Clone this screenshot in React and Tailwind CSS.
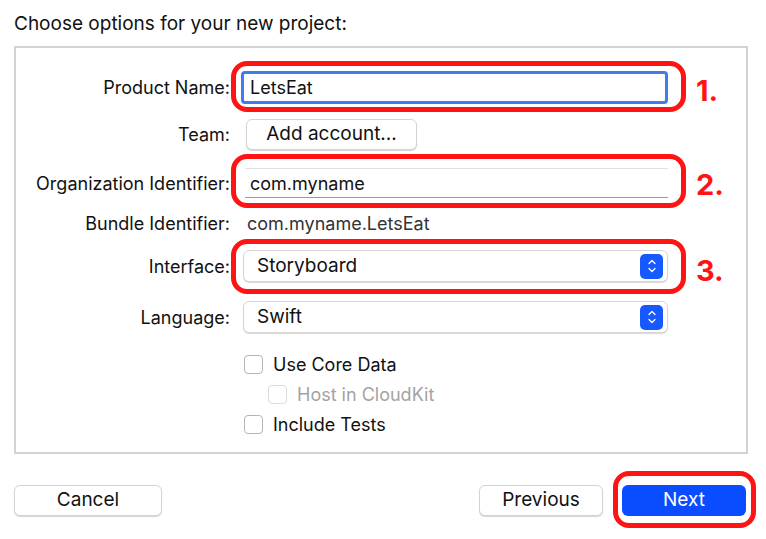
import { ChevronUp, ChevronDown } from 'lucide-react';

function Stepper() {
  return (
    <div className="w-[23px] h-[25px] rounded-[5px] bg-[#1559ff] flex flex-col items-center justify-center text-white">
      <ChevronUp size={12} strokeWidth={2.5} className="-mb-[2px]" />
      <ChevronDown size={12} strokeWidth={2.5} className="-mt-[2px]" />
    </div>
  );
}

function Label({ children }) {
  return <div className="w-[215px] shrink-0 text-right pr-[1px] text-[18px] text-[#111]">{children}</div>;
}

function Callout({ top, height, num }) {
  return (
    <>
      <div
        className="absolute left-[215px] w-[455px] rounded-[16px] border-[5px] border-[#ff1414] pointer-events-none"
        style={{ top, height }}
      />
      <div className="absolute left-[680px] text-[29px] font-bold text-[#ff1414] leading-none" style={{ top: top + height / 2 - 11 }}>
        {num}
      </div>
    </>
  );
}

function Popup({ value }) {
  return (
    <div className="ml-[12px] w-[425px] h-[32px] bg-white rounded-[6px] border border-[#d6d6d6] shadow-[0_1px_1px_rgba(0,0,0,0.15)] flex items-center justify-between pl-[13px] pr-[4px] text-[19px] text-[#111]">
      <span>{value}</span>
      <Stepper />
    </div>
  );
}

function Check({ label, disabled }) {
  return (
    <div className={`flex items-center gap-[10px] ${disabled ? 'ml-[24px]' : ''}`}>
      <div className={`w-[19px] h-[19px] rounded-[4px] border bg-white ${disabled ? 'border-[#dcdcdc]' : 'border-[#b5b5b5]'}`} />
      <span className={`text-[18px] ${disabled ? 'text-[#a3a3a3]' : 'text-[#111]'}`}>{label}</span>
    </div>
  );
}

function Button({ children, className }) {
  return (
    <button className={`h-[31px] rounded-[6px] border border-[#d4d4d4] bg-white shadow-[0_1px_1px_rgba(0,0,0,0.18)] text-[19px] text-[#111] ${className}`}>
      {children}
    </button>
  );
}

export default function App() {
  return (
    <div className="w-[766px] h-[539px] bg-white font-['Inter',sans-serif] relative">
      <div className="pl-[14px] pt-[10px] h-[46px] text-[19px] text-[#111]">Choose options for your new project:</div>

      <div className="mx-[14px] w-[734px] h-[408px] border-2 border-[#d3d3d3] pt-[15px]">
        {/* product name */}
        <div className="relative h-[48px] flex items-center">
          <Label>Product Name:</Label>
          <div className="ml-[10px] w-[427px] h-[33px] rounded-[4px] border-[3px] border-[#3f7cf0] bg-white flex items-center pl-[6px] text-[18px] text-[#111]">
            LetsEat
          </div>
          <Callout top={-2} height={51} num="1." />
        </div>

        {/* team */}
        <div className="h-[46px] flex items-center">
          <Label>Team:</Label>
          <Button className="ml-[15px] w-[171px]">Add account...</Button>
        </div>

        {/* org identifier */}
        <div className="relative h-[52px] flex items-center">
          <Label>Organization Identifier:</Label>
          <div className="ml-[14px] w-[423px] h-[30px] border-t border-[#e2e2e2] border-b border-b-[#9a9a9a] bg-white flex items-center pl-[5px] text-[18px] text-[#111]">
            com.myname
          </div>
          <Callout top={-3} height={54} num="2." />
        </div>

        {/* bundle */}
        <div className="h-[28px] flex items-center">
          <Label>Bundle Identifier:</Label>
          <span className="ml-[16px] text-[18px] text-[#333]">com.myname.LetsEat</span>
        </div>

        {/* interface */}
        <div className="relative h-[58px] flex items-center">
          <Label>Interface:</Label>
          <Popup value="Storyboard" />
          <Callout top={2} height={55} num="3." />
        </div>

        {/* language */}
        <div className="h-[44px] flex items-center">
          <Label>Language:</Label>
          <Popup value="Swift" />
        </div>

        <div className="pl-[228px] pt-[10px] flex flex-col">
          <div className="h-[30px] flex items-center"><Check label="Use Core Data" /></div>
          <div className="h-[30px] flex items-center"><Check label="Host in CloudKit" disabled /></div>
          <div className="h-[30px] flex items-center"><Check label="Include Tests" /></div>
        </div>
      </div>

      <div className="flex items-center pl-[14px] pr-[20px] pt-[31px]">
        <Button className="w-[148px]">Cancel</Button>
        <div className="flex-1" />
        <Button className="w-[124px]">Previous</Button>
        <div className="relative ml-[19px]">
          <button className="w-[124px] h-[31px] rounded-[6px] bg-[#0a4cff] text-white text-[19px]">Next</button>
          <div className="absolute -left-[9px] -top-[14px] w-[143px] h-[57px] rounded-[16px] border-[5px] border-[#ff1414] pointer-events-none" />
        </div>
      </div>
    </div>
  );
}
